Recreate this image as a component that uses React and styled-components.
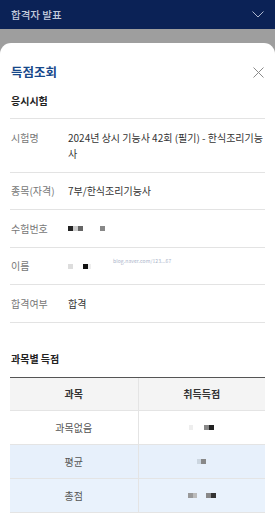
import styled, { createGlobalStyle } from "styled-components";

const GlobalStyle = createGlobalStyle`
  html, body {
    margin: 0;
    padding: 0;
    background: #9e9e9e;
    font-family: "Noto Sans CJK KR", "Noto Sans", sans-serif;
    -webkit-font-smoothing: antialiased;
  }
`;

//Outer
const Page = styled.div`
  width: 275px;
  height: 518px;
  overflow: hidden;
  background: #9e9e9e;
`;

//Top bar
const TopBar = styled.div`
  height: 29px;
  background: #0b2256;
  display: flex;
  align-items: center;
  justify-content: space-between;
  padding: 0 11px;
  box-sizing: border-box;
`;
const TopTitle = styled.span`
  color: #c3cbdc;
  font-size: 10.5px;
  font-weight: 500;
`;

//Modal
const Sheet = styled.div`
  margin-top: 14px;
  background: #fff;
  border-radius: 11px 11px 0 0;
  padding: 20px 10px 0;
  height: 475px;
  box-sizing: border-box;
`;
const SheetHead = styled.div`
  display: flex;
  align-items: center;
  justify-content: space-between;
  height: 18px;
`;
const SheetTitle = styled.h1`
  margin: 0 0 0 1px;
  font-size: 12.5px;
  font-weight: 700;
  color: #17488a;
  line-height: 18px;
`;
const CloseBtn = styled.button`
  border: 0;
  background: none;
  padding: 0;
  margin-right: 1px;
  display: flex;
`;
const SectionTitle = styled.h2`
  margin: ${(p) => p.$top}px 0 0 1px;
  font-size: 10px;
  font-weight: 700;
  color: #222;
  line-height: 16px;
`;

const InfoList = styled.div`
  margin-top: 9px;
  border-top: 1px solid #e3e3e3;
  position: relative;
`;
const InfoRow = styled.div`
  display: flex;
  padding: 10.5px 0 10px 1px;
  border-bottom: 1px solid #e3e3e3;
  font-size: 10px;
  line-height: 16px;
`;
const Label = styled.div`
  width: 57px;
  flex-shrink: 0;
  color: #777;
`;
const Value = styled.div`
  flex: 1;
  color: #333;
  padding-right: 2px;
`;
const Mosaic = styled.div`
  display: flex;
  align-items: center;
  height: 16px;
  justify-content: ${(p) => p.$center ? "center" : "flex-start"};
`;
const Pix = styled.span`
  display: inline-block;
  width: ${(p) => p.$w || 5}px;
  height: ${(p) => p.$h || 5}px;
  margin-left: ${(p) => p.$gap || 0}px;
  background: ${(p) => p.$c};
`;
const Watermark = styled.div`
  position: absolute;
  left: 103px;
  top: 138px;
  font-size: 5px;
  color: #a9b3c9;
  letter-spacing: 0.1px;
`;

//Score table
const Table = styled.div`
  margin-top: 10px;
  border-top: 1.5px solid #555;
  display: grid;
  grid-template-columns: 1fr 1fr;
`;
const Cell = styled.div`
  height: ${(p) => p.$h}px;
  display: flex;
  align-items: center;
  justify-content: center;
  font-size: 10px;
  font-weight: ${(p) => p.$head ? 700 : 400};
  color: ${(p) => p.$head ? "#333" : "#555"};
  background: ${(p) => p.$bg};
  border-bottom: 1px solid #e4e4e4;
  border-left: ${(p) => p.$right ? "1px solid #e4e4e4" : "0"};
  box-sizing: border-box;
`;

const ChevronDown = () => (
  <svg width="12" height="7" viewBox="0 0 12 7" fill="none">
    <path d="M0.5 0.5L6 6L11.5 0.5" stroke="#aeb8cf" strokeWidth="1" />
  </svg>
);

const CloseIcon = () => (
  <svg width="11" height="11" viewBox="0 0 11 11" fill="none">
    <path d="M0.5 0.5L10.5 10.5M10.5 0.5L0.5 10.5" stroke="#8a8a8a" strokeWidth="1" />
  </svg>
);

const rows = [
  { name: "과목없음", bg: "#fff", pix: [["#eee", 4, 0], ["#888", 5, 11], ["#222", 5, 0]] },
  { name: "평균", bg: "#e7f0fb", pix: [["#ccd6e0", 4, 0], ["#888", 5, 0]] },
  { name: "총점", bg: "#e9f2fc", pix: [["#999", 5, 0], ["#bbb", 4, 0], ["#888", 5, 9], ["#333", 5, 0]] },
];

const App = () => {
  return (
    <>
      <GlobalStyle />
      <Page>
        <TopBar>
          <TopTitle>합격자 발표</TopTitle>
          <ChevronDown />
        </TopBar>
        <Sheet>
          <SheetHead>
            <SheetTitle>득점조회</SheetTitle>
            <CloseBtn aria-label="닫기">
              <CloseIcon />
            </CloseBtn>
          </SheetHead>

          <SectionTitle $top={12}>응시시험</SectionTitle>
          <InfoList>
            <InfoRow>
              <Label>시험명</Label>
              <Value>2024년 상시 기능사 42회 (필기) - 한식조리기능사</Value>
            </InfoRow>
            <InfoRow>
              <Label>종목(자격)</Label>
              <Value>7부/한식조리기능사</Value>
            </InfoRow>
            <InfoRow>
              <Label>수험번호</Label>
              <Value>
                <Mosaic>
                  <Pix $c="#222" />
                  <Pix $c="#ccc" />
                  <Pix $c="#666" />
                  <Pix $c="#888" $gap={17} />
                </Mosaic>
              </Value>
            </InfoRow>
            <InfoRow>
              <Label>이름</Label>
              <Value>
                <Mosaic>
                  <Pix $c="#ddd" />
                  <Pix $c="#111" $gap={10} />
                  <Pix $c="#eee" $w={3} />
                </Mosaic>
              </Value>
            </InfoRow>
            <InfoRow>
              <Label>합격여부</Label>
              <Value>합격</Value>
            </InfoRow>
            <Watermark>blog.naver.com/123...67</Watermark>
          </InfoList>

          <SectionTitle $top={28}>과목별 득점</SectionTitle>
          <Table>
            <Cell $h={33} $head $bg="#f4f4f4">과목</Cell>
            <Cell $h={33} $head $right $bg="#f4f4f4">취득득점</Cell>
            {rows.map((r) => (
              <>
                <Cell key={r.name} $h={34} $bg={r.bg}>{r.name}</Cell>
                <Cell key={r.name + "v"} $h={34} $right $bg={r.bg}>
                  <Mosaic $center>
                    {r.pix.map(([c, w, gap], i) => (
                      <Pix key={i} $c={c} $w={w} $gap={gap} />
                    ))}
                  </Mosaic>
                </Cell>
              </>
            ))}
          </Table>
        </Sheet>
      </Page>
    </>
  );
};

export default App;
